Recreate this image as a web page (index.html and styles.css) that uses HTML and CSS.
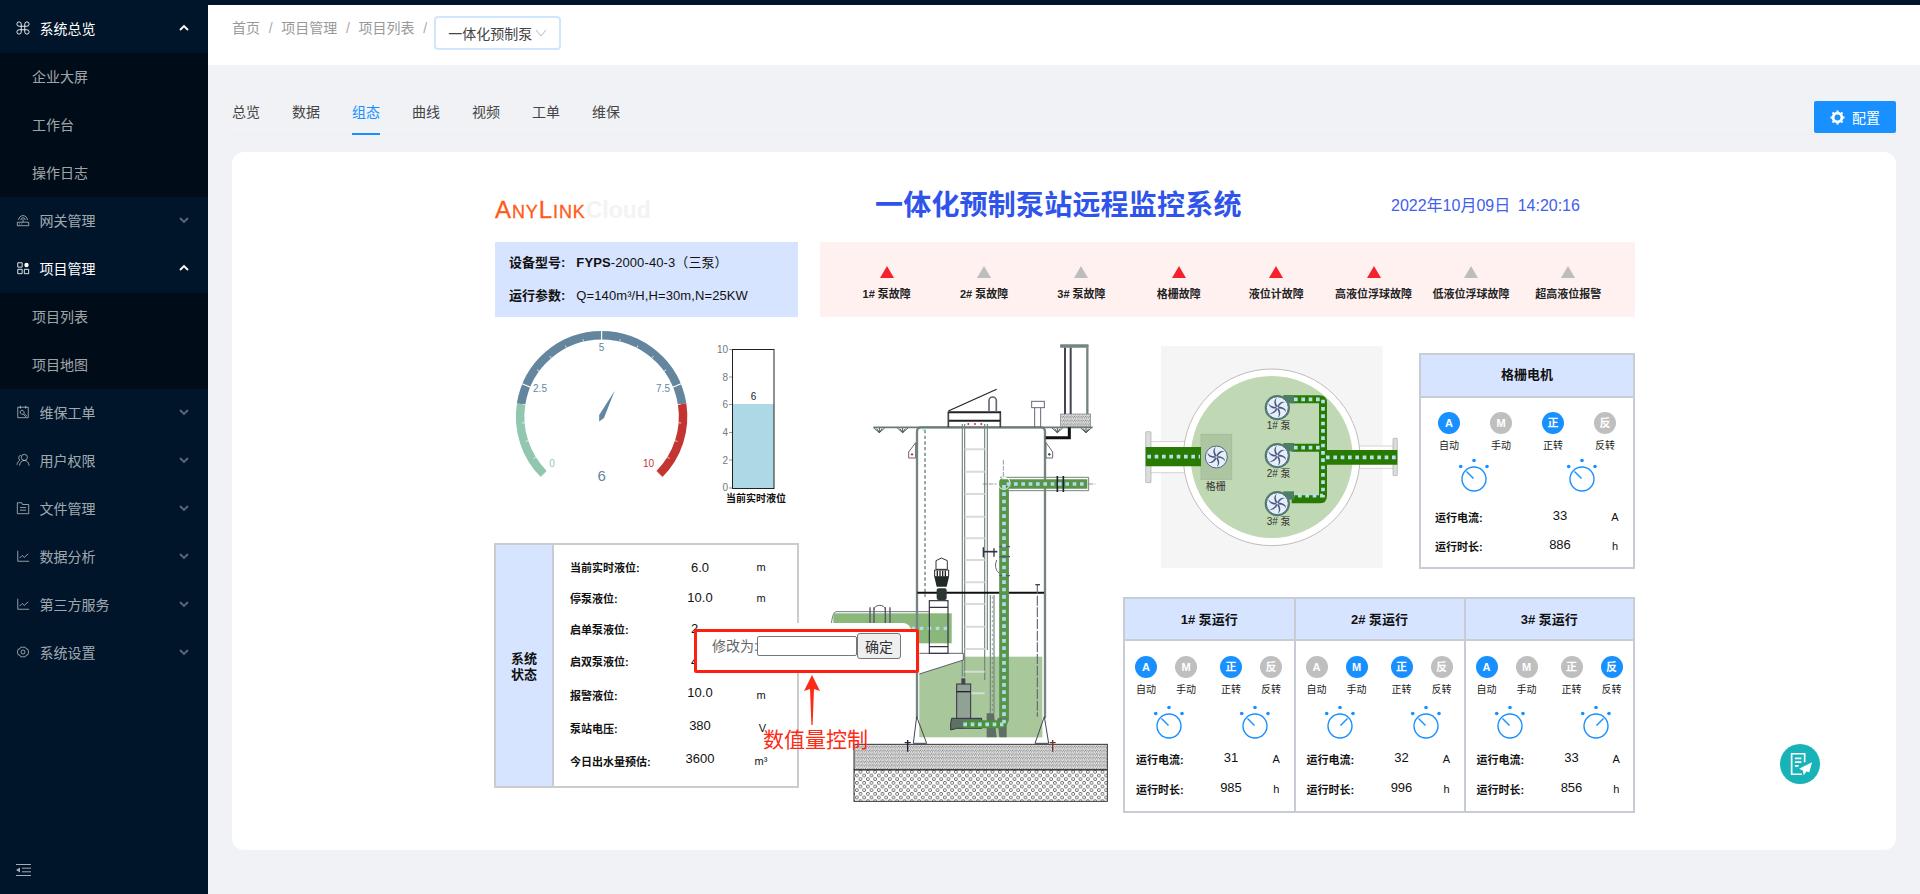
FILE: index.html
```html
<!DOCTYPE html>
<html lang="zh-CN">
<head>
<meta charset="utf-8">
<title>一体化预制泵</title>
<link rel="stylesheet" href="styles.css">
</head>
<body>
<svg class="defs" width="0" height="0" aria-hidden="true">
  <defs>
    <symbol id="chev-d" viewBox="0 0 10 10"><path d="M1 3l4 4 4-4" fill="none" stroke="currentColor" stroke-width="1.8"/></symbol>
    <symbol id="chev-u" viewBox="0 0 10 10"><path d="M1 7l4-4 4 4" fill="none" stroke="currentColor" stroke-width="1.8"/></symbol>
    <symbol id="knob-l" viewBox="0 0 40 40">
      <g fill="#1890ff"><circle cx="6.7" cy="11.5" r="1.8"/><circle cx="20" cy="5.5" r="1.8"/><circle cx="33" cy="11.5" r="1.8"/></g>
      <circle cx="20" cy="24" r="12" fill="none" stroke="#1890ff" stroke-width="1.4"/>
      <path d="M12.5 16.5L19.5 23.5" stroke="#1890ff" stroke-width="1.4"/>
    </symbol>
    <symbol id="knob-r" viewBox="0 0 40 40">
      <g fill="#1890ff"><circle cx="6.7" cy="11.5" r="1.8"/><circle cx="20" cy="5.5" r="1.8"/><circle cx="33" cy="11.5" r="1.8"/></g>
      <circle cx="20" cy="24" r="12" fill="none" stroke="#1890ff" stroke-width="1.4"/>
      <path d="M27.5 16.5L20.5 23.5" stroke="#1890ff" stroke-width="1.4"/>
    </symbol>
    <pattern id="speck" width="11" height="11" patternUnits="userSpaceOnUse">
      <rect width="11" height="11" fill="#e4e4e4"/>
      <g fill="#333"><circle cx="2" cy="3" r="1.3"/><circle cx="7.500" cy="1.500" r="1.100"/><circle cx="9.500" cy="6" r="1.400"/><circle cx="4.500" cy="7" r="1.200"/><circle cx="1" cy="9.500" r="1.100"/><circle cx="7" cy="10" r="1.300"/></g>
    </pattern>
    <pattern id="rings" width="22" height="22" patternUnits="userSpaceOnUse">
      <circle cx="5.500" cy="5.500" r="4.500" fill="none" stroke="#333" stroke-width="2"/>
      <circle cx="16.500" cy="16.500" r="4.500" fill="none" stroke="#333" stroke-width="2"/>
    </pattern>
    <g id="blade"><path d="M0-5C5-14 14-22 25-16 16-17 8-11 3 0Z" fill="#4a5a7c"/></g>
    <g id="fan">
      <circle r="33" fill="#e6eefc" stroke="#55657f" stroke-width="3"/>
      <use href="#blade"/>
      <use href="#blade" transform="rotate(60)"/>
      <use href="#blade" transform="rotate(120)"/>
      <use href="#blade" transform="rotate(180)"/>
      <use href="#blade" transform="rotate(240)"/>
      <use href="#blade" transform="rotate(300)"/>
    </g>
    <g id="gnd" fill="none" stroke="#4c5a58" stroke-width="3"><path d="M-16 0L0 14 16 0M-8 2L0 14 8 2M0 0V14"/></g>
  </defs>
</svg>

<div class="app">
  <aside class="sider">
    <nav class="menu">
      <a class="item open">
        <svg class="ico" viewBox="0 0 16 16"><path d="M6 6H3.500A2.500 2.500 0 1 1 6 3.500V12.500A2.500 2.500 0 1 1 3.500 10H12.500A2.500 2.500 0 1 1 10 12.500V3.500A2.500 2.500 0 1 1 12.500 6H6Z"/></svg>
        <span class="lbl">系统总览</span><svg class="chev"><use href="#chev-u"/></svg>
      </a>
      <div class="sub">
        <a class="sub-item">企业大屏</a>
        <a class="sub-item">工作台</a>
        <a class="sub-item">操作日志</a>
      </div>
      <a class="item">
        <svg class="ico" viewBox="0 0 16 16"><path d="M1.500 10.500h13v4h-13zM3 8a5 5 0 0 1 10 0M5.500 8a2.500 2.500 0 0 1 5 0M8 7v3.500M3.500 12.500h1M6 12.500h1"/></svg>
        <span class="lbl">网关管理</span><svg class="chev"><use href="#chev-d"/></svg>
      </a>
      <a class="item open">
        <svg class="ico" viewBox="0 0 16 16"><path d="M2 2h5v5H2zM2 9.500h5v5H2zM9.500 9.500h5v5h-5z"/><circle class="solid" cx="12" cy="4.500" r="2.500"/></svg>
        <span class="lbl">项目管理</span><svg class="chev"><use href="#chev-u"/></svg>
      </a>
      <div class="sub">
        <a class="sub-item">项目列表</a>
        <a class="sub-item">项目地图</a>
      </div>
      <a class="item">
        <svg class="ico" viewBox="0 0 16 16"><path d="M2 2.500h12v12H2zM5 1v3M11 1v3M5.500 6.500a2.300 2.300 0 0 1 3.500 2.800l3 3-1 1-3-3a2.300 2.300 0 0 1-2.500-3.800"/></svg>
        <span class="lbl">维保工单</span><svg class="chev"><use href="#chev-d"/></svg>
      </a>
      <a class="item">
        <svg class="ico" viewBox="0 0 16 16"><circle cx="9.500" cy="5" r="3.500"/><path d="M4 14.500c.5-3.500 2.500-6 5.500-6s5 2.500 5.500 6M5.500 2.500a3 3 0 0 0-1 5.500C3 9 1.500 11 1 13.500"/></svg>
        <span class="lbl">用户权限</span><svg class="chev"><use href="#chev-d"/></svg>
      </a>
      <a class="item">
        <svg class="ico" viewBox="0 0 16 16"><path d="M1.500 2h5l1 2h7v10.500h-13zM4.500 7.500h7M4.500 10.500h7"/></svg>
        <span class="lbl">文件管理</span><svg class="chev"><use href="#chev-d"/></svg>
      </a>
      <a class="item">
        <svg class="ico" viewBox="0 0 16 16"><path d="M2 2v12h13M4 10.500l3-3 2.500 2 4.500-4"/></svg>
        <span class="lbl">数据分析</span><svg class="chev"><use href="#chev-d"/></svg>
      </a>
      <a class="item">
        <svg class="ico" viewBox="0 0 16 16"><path d="M2 2v12h13M4 10.500l3-3 2.500 2 4.500-4"/></svg>
        <span class="lbl">第三方服务</span><svg class="chev"><use href="#chev-d"/></svg>
      </a>
      <a class="item">
        <svg class="ico" viewBox="0 0 16 16"><path d="M5.500 2.500h5l1 1.800 2 .5 1 3.200-1 3.200-2 .5-1 1.800h-5l-1-1.800-2-.5-1-3.200 1-3.200 2-.5z"/><circle cx="8" cy="8" r="2.300"/></svg>
        <span class="lbl">系统设置</span><svg class="chev"><use href="#chev-d"/></svg>
      </a>
    </nav>
    <div class="collapse">
      <svg viewBox="0 0 15 12"><path d="M0 .5h15M6 4.200h9M6 7.800h9M0 11.500h15" stroke="currentColor" fill="none"/><path d="M4 3.500v5L0 6z" fill="currentColor"/></svg>
    </div>
  </aside>

  <div class="main">
    <header class="topbar">
      <span class="crumb">首页</span><span class="sep">/</span>
      <span class="crumb">项目管理</span><span class="sep">/</span>
      <span class="crumb">项目列表</span><span class="sep">/</span>
      <span class="tag">一体化预制泵<svg viewBox="0 0 12 8"><path d="M1 1l5 6 5-6" fill="none" stroke="currentColor"/></svg></span>
    </header>

    <div class="content">
      <div class="tabbar">
        <div class="tabs">
          <a class="tab">总览</a><a class="tab">数据</a><a class="tab active">组态</a><a class="tab">曲线</a><a class="tab">视频</a><a class="tab">工单</a><a class="tab">维保</a>
        </div>
        <button class="cfg">
          <svg viewBox="0 0 16 16"><circle cx="8" cy="8" r="4.700" fill="none" stroke="#fff" stroke-width="3"/><path d="M8 .5v3M8 12.500v3M.5 8h3M12.500 8h3M2.700 2.700l2.100 2.100M11.200 11.200l2.100 2.100M2.700 13.300l2.100-2.100M11.200 4.800l2.100-2.100" stroke="#fff" stroke-width="2.200"/></svg>
          配置
        </button>
      </div>

      <main class="card">
        <div class="logo"><span class="big">A</span>NY<span class="big">L</span>INK<span class="cloud">Cloud</span></div>
        <h1 class="title">一体化预制泵站远程监控系统</h1>
        <div class="date">2022年10月09日 14:20:16</div>

        <section class="info">
          <p><b>设备型号:</b><span><b>FYPS</b>-2000-40-3（三泵）</span></p>
          <p><b>运行参数:</b><span>Q=140m³/H,H=30m,N=25KW</span></p>
        </section>

        <section class="alarms">
          <div class="alarm"><i class="tri red"></i><span>1# 泵故障</span></div>
          <div class="alarm"><i class="tri"></i><span>2# 泵故障</span></div>
          <div class="alarm"><i class="tri"></i><span>3# 泵故障</span></div>
          <div class="alarm"><i class="tri red"></i><span>格栅故障</span></div>
          <div class="alarm"><i class="tri red"></i><span>液位计故障</span></div>
          <div class="alarm"><i class="tri red"></i><span>高液位浮球故障</span></div>
          <div class="alarm"><i class="tri"></i><span>低液位浮球故障</span></div>
          <div class="alarm"><i class="tri"></i><span>超高液位报警</span></div>
        </section>

        <svg class="gauge" viewBox="510 325 185 165">
          <g fill="none" stroke-width="8.500">
            <path d="M544 474.300A81.500 81.500 0 0 1 521.100 404" stroke="#91c7ae"/>
            <path d="M521.100 404A81.500 81.500 0 0 1 682.100 404" stroke="#63869e"/>
            <path d="M682.100 404A81.500 81.500 0 0 1 659.200 474.300" stroke="#c23531"/>
          </g>
          <path d="M546 472.300A78.600 78.600 0 1 1 657.200 472.300" fill="none" stroke="#fff" stroke-width="2.600" pathLength="20" stroke-dasharray="0.05 0.95" stroke-dashoffset="0.025" opacity=".7"/>
          <path d="M544 474.300A81.500 81.500 0 1 1 659.200 474.300" fill="none" stroke="#fff" stroke-width="9" pathLength="4" stroke-dasharray="0.012 0.988" stroke-dashoffset="0.006"/>
          <path d="M614.700 390.700L599.200 415V421.600L604 418Z" fill="#63869e"/>
          <g class="g-lab">
            <text x="552" y="466.500" fill="#91c7ae">0</text>
            <text x="540" y="391.500" fill="#63869e">2.5</text>
            <text x="601.600" y="350.500" fill="#63869e">5</text>
            <text x="663" y="391.500" fill="#63869e">7.5</text>
            <text x="648.600" y="466.500" fill="#c23531">10</text>
          </g>
          <text class="g-val" x="601.600" y="481">6</text>
        </svg>

        <svg class="thermo" viewBox="710 340 90 170">
          <rect x="732.500" y="404" width="41.500" height="84" fill="#add8e6"/>
          <rect x="732.500" y="349.500" width="41.500" height="139" fill="none" stroke="#222"/>
          <g stroke="#999"><path d="M729 349.500h3M729 377h3M729 404.500h3M729 432.500h3M729 460h3M729 488h3"/></g>
          <g class="t-lab">
            <text x="728" y="353">10</text><text x="728" y="380.500">8</text><text x="728" y="408">6</text>
            <text x="728" y="436">4</text><text x="728" y="463.500">2</text><text x="728" y="491">0</text>
          </g>
          <text class="t-v" x="753.500" y="399.500">6</text>
          <text class="t-cap" x="756" y="502">当前实时液位</text>
        </svg>

        <svg class="tank" viewBox="0 0 1020 1440">
          <rect x="162" y="1243" width="760" height="76" fill="url(#speck)" stroke="#333" stroke-width="3"/>
          <rect x="162" y="1320" width="760" height="94" fill="url(#rings)" stroke="#333" stroke-width="3"/>
          <rect x="358" y="980" width="369" height="242" fill="#a8c79a"/>
          <!-- inlet -->
          <path d="M388 845H108a14 46 0 0 0 0 92" fill="none" stroke="#778" stroke-width="3"/>
          <rect x="100" y="850" width="355" height="90" fill="#8ab77a"/>
          <path d="M210 832v50M222 832v50M256 832v50M270 832v50" stroke="#556" stroke-width="4"/>
          <path d="M222 838a17 12 0 0 1 34 0" fill="none" stroke="#556" stroke-width="3"/>
          <path d="M335 895H452" stroke="#b0dcea" stroke-width="10" stroke-dasharray="11 13"/>
          <!-- walls -->
          <path d="M351 1165V305q0-13 13-13H722q13 0 13 13V1165" fill="none" stroke="#74857f" stroke-width="7"/>
          <path d="M220 292H878" stroke="#6c7a78" stroke-width="5"/>
          <path d="M375 300V800" stroke="#9aa8a6" stroke-width="6" stroke-dasharray="10 7"/>
          <path d="M368 296h10l-4 6h-6z" fill="#9fe6cf"/>
          <!-- ladder -->
          <path d="M487 282V1040M494 282V1040M554 282V1050M562 282V960" stroke="#74857f" stroke-width="3.500" fill="none"/>
          <path d="M494 358H554M494 425H554M494 492H554M494 560H554M494 625H554M494 690H554M494 757H554M494 822H554M494 890H554M494 957H554M494 1025H554M494 1090H554" stroke="#d6dcda" stroke-width="6"/>
          <!-- hatch -->
          <path d="M445 245V292M601 245V292" stroke="#444" stroke-width="5"/>
          <path d="M445 247H603M447 272H601" stroke="#222" stroke-width="6"/>
          <path d="M445 243L590 178" stroke="#222" stroke-width="3.500"/>
          <path d="M567 245V212a11 11 0 0 1 22 0V245" fill="none" stroke="#667" stroke-width="5"/>
          <g fill="#c33"><circle cx="505" cy="282" r="3"/><circle cx="525" cy="282" r="3"/><circle cx="544" cy="282" r="3"/></g>
          <!-- vent -->
          <rect x="695" y="214" width="38" height="19" fill="#fff" stroke="#667" stroke-width="3"/>
          <path d="M704 233V292M722 233V292" stroke="#667" stroke-width="3"/>
          <!-- control post -->
          <rect x="782" y="252" width="90" height="38" fill="url(#speck)" stroke="#74857f" stroke-width="2"/>
          <path d="M795 52V252M812 52V252" stroke="#445" stroke-width="6"/>
          <path d="M862 52V252" stroke="#74857f" stroke-width="7"/>
          <rect x="780" y="43" width="86" height="10" rx="3" fill="#74857f"/>
          <path d="M737 323H808V292" fill="none" stroke="#111" stroke-width="9"/>
          <!-- ground marks -->
          <use href="#gnd" x="238" y="294"/><use href="#gnd" x="308" y="294"/><use href="#gnd" x="772" y="294"/><use href="#gnd" x="858" y="294"/>
          <!-- brackets -->
          <path d="M347 338L326 366V384H347ZM738 338L758 366V384H738Z" fill="#fff" stroke="#667" stroke-width="3"/>
          <circle cx="336" cy="373" r="3.500" fill="#c33"/><circle cx="748" cy="373" r="3.500" fill="#234"/>
          <!-- floor -->
          <path d="M352 788H732" stroke="#111" stroke-width="6"/>
          <!-- thin pipes -->
          <path d="M712 762V1160" stroke="#667" stroke-width="3.500" stroke-dasharray="30 5"/>
          <path d="M706 764H720" stroke="#445" stroke-width="4"/>
          <path d="M571 795V1150M582 795V1150" stroke="#74857f" stroke-width="3.500"/>
          <path d="M577 800V1150" stroke="#667" stroke-width="2" stroke-dasharray="6 8"/>
          <!-- shelf -->
          <path d="M358 970H490V990L358 1032" fill="#fff" stroke="#445" stroke-width="2.500"/>
          <!-- pump + motor in dry chamber -->
          <rect x="388" y="812" width="56" height="158" fill="none" stroke="#334" stroke-width="3.500"/>
          <path d="M388 832H444M388 950H444" stroke="#334" stroke-width="3.500"/>
          <rect x="410" y="775" width="30" height="35" rx="6" fill="#2b3533"/>
          <path d="M403 740H447L440 770H410Z" fill="#222a28"/>
          <path d="M408 692L424 684 442 692V718H408Z" fill="#fff" stroke="#334" stroke-width="3"/>
          <path d="M404 720H446V740H404Z" fill="#fff" stroke="#222" stroke-width="3"/>
          <path d="M412 722v16M420 722v16M428 722v16M436 722v16" stroke="#222" stroke-width="4"/>
          <!-- outlet pipe -->
          <path d="M600 442H866V482H625V1175M600 1175V458Q600 442 616 442" fill="none" stroke="#74857f" stroke-width="3"/>
          <path d="M612 1170V462H862" fill="none" stroke="#5a9448" stroke-width="28"/>
          <path d="M548 462H590M866 462H886M610 390V440" stroke="#667" stroke-width="2" stroke-dasharray="14 4"/>
          <circle cx="612" cy="460" r="18" fill="none" stroke="#fff" stroke-width="3"/>
          <path d="M772 438V486M790 438V486" stroke="#223" stroke-width="5"/>
          <path d="M598 650H630M598 680H630M598 737H630" stroke="#556" stroke-width="4"/>
          <path d="M552 665H592" stroke="#334" stroke-width="5"/>
          <path d="M550 652V682M582 655V680" stroke="#334" stroke-width="4"/>
          <path d="M590 690Q580 715 598 730" fill="none" stroke="#667" stroke-width="3"/>
          <!-- submersible -->
          <rect x="470" y="1062" width="42" height="105" fill="#8fa294" stroke="#334" stroke-width="3"/>
          <path d="M470 1085H512" stroke="#223" stroke-width="4"/>
          <rect x="484" y="1045" width="12" height="18" fill="#445"/>
          <path d="M455 1165H545V1195H470L452 1200V1180Z" fill="#5f7064" stroke="#334" stroke-width="3"/>
          <path d="M560 1150H582L590 1222H560ZM592 1165H620V1222H598Z" fill="#5f6f66"/>
          <path d="M490 1183H600Q612 1183 612 1170" fill="none" stroke="#4f8f3c" stroke-width="24"/>
          <path d="M612 1180V462H862M490 1183H610" fill="none" stroke="#aedde8" stroke-width="11" stroke-dasharray="11 11"/>
          <!-- feet and bolts -->
          <path d="M350 1160L340 1240H380ZM733 1160L705 1240H746Z" fill="none" stroke="#445" stroke-width="3"/>
          <path d="M323 1230V1265M314 1238H332" stroke="#223" stroke-width="4"/>
          <path d="M758 1230V1265M749 1238H767" stroke="#733" stroke-width="4"/>
        </svg>

        <svg class="plan" viewBox="-30 0 795 705">
          <rect x="33" y="18" width="665" height="666" fill="#f5f5f5"/>
          <rect x="0" y="305" width="110" height="93" fill="#fff" stroke="#d4d4d4" stroke-width="3"/>
          <rect x="-13" y="275" width="16" height="153" rx="2" fill="#dcdcdc" stroke="#aaa" stroke-width="2"/>
          <rect x="620" y="318" width="110" height="67" fill="#fff" stroke="#d4d4d4" stroke-width="3"/>
          <rect x="729" y="295" width="13" height="112" rx="2" fill="#dcdcdc" stroke="#aaa" stroke-width="2"/>
          <circle cx="365" cy="352" r="265" fill="#fff" stroke="#bdbdbd" stroke-width="3"/>
          <circle cx="365" cy="351" r="243" fill="#c0d8b4"/>
          <rect x="153" y="283" width="92" height="135" fill="#adc6a1" stroke="#a5bd9b" stroke-width="3"/>
          <path d="M-13 350H153" stroke="#287b00" stroke-width="58"/>
          <path d="M520 352H742" stroke="#287b00" stroke-width="44"/>
          <path d="M425 178H508Q519 178 519 189V467Q519 478 508 478H425M425 323H519" fill="none" stroke="#287b00" stroke-width="24"/>
          <g fill="#4c7f63"><rect x="400" y="165" width="32" height="25"/><rect x="400" y="309" width="32" height="25"/><rect x="400" y="454" width="32" height="25"/></g>
          <g fill="none" stroke="#b5e0ec" stroke-width="11" stroke-dasharray="11 11">
            <path d="M-8 350H150"/><path d="M528 352H740"/>
            <path d="M432 178H519V467H432"/><path d="M432 323H512"/>
          </g>
          <g fill="#4c7f63"><circle cx="382" cy="203" r="38"/><circle cx="382" cy="347" r="38"/><circle cx="382" cy="491" r="38"/></g>
          <use href="#fan" x="382" y="203"/><use href="#fan" x="382" y="347"/><use href="#fan" x="382" y="491"/>
          <use href="#fan" x="199" y="351"/>
          <g class="p-lab">
            <text x="386" y="266">1# 泵</text><text x="386" y="410">2# 泵</text>
            <text x="386" y="556">3# 泵</text><text x="197" y="451">格栅</text>
          </g>
        </svg>

        <section class="motor mcard">
          <h4>格栅电机</h4>
          <div class="lamps">
            <div class="lampc"><b class="lamp on">A</b><span>自动</span></div>
            <div class="lampc"><b class="lamp">M</b><span>手动</span></div>
            <div class="lampc"><b class="lamp on">正</b><span>正转</span></div>
            <div class="lampc"><b class="lamp">反</b><span>反转</span></div>
          </div>
          <div class="knobs"><svg><use href="#knob-l"/></svg><svg><use href="#knob-l"/></svg></div>
          <div class="mrow"><b>运行电流:</b><span>33</span><em>A</em></div>
          <div class="mrow"><b>运行时长:</b><span>886</span><em>h</em></div>
        </section>

        <section class="pumps">
          <div class="mcard">
            <h4>1# 泵运行</h4>
            <div class="lamps">
              <div class="lampc"><b class="lamp on">A</b><span>自动</span></div>
              <div class="lampc"><b class="lamp">M</b><span>手动</span></div>
              <div class="lampc"><b class="lamp on">正</b><span>正转</span></div>
              <div class="lampc"><b class="lamp">反</b><span>反转</span></div>
            </div>
            <div class="knobs"><svg><use href="#knob-l"/></svg><svg><use href="#knob-l"/></svg></div>
            <div class="mrow"><b>运行电流:</b><span>31</span><em>A</em></div>
            <div class="mrow"><b>运行时长:</b><span>985</span><em>h</em></div>
          </div>
          <div class="mcard">
            <h4>2# 泵运行</h4>
            <div class="lamps">
              <div class="lampc"><b class="lamp">A</b><span>自动</span></div>
              <div class="lampc"><b class="lamp on">M</b><span>手动</span></div>
              <div class="lampc"><b class="lamp on">正</b><span>正转</span></div>
              <div class="lampc"><b class="lamp">反</b><span>反转</span></div>
            </div>
            <div class="knobs"><svg><use href="#knob-r"/></svg><svg><use href="#knob-l"/></svg></div>
            <div class="mrow"><b>运行电流:</b><span>32</span><em>A</em></div>
            <div class="mrow"><b>运行时长:</b><span>996</span><em>h</em></div>
          </div>
          <div class="mcard">
            <h4>3# 泵运行</h4>
            <div class="lamps">
              <div class="lampc"><b class="lamp on">A</b><span>自动</span></div>
              <div class="lampc"><b class="lamp">M</b><span>手动</span></div>
              <div class="lampc"><b class="lamp">正</b><span>正转</span></div>
              <div class="lampc"><b class="lamp on">反</b><span>反转</span></div>
            </div>
            <div class="knobs"><svg><use href="#knob-l"/></svg><svg><use href="#knob-r"/></svg></div>
            <div class="mrow"><b>运行电流:</b><span>33</span><em>A</em></div>
            <div class="mrow"><b>运行时长:</b><span>856</span><em>h</em></div>
          </div>
        </section>

        <section class="status">
          <div class="st-head">系统<br>状态</div>
          <div class="st-rows">
            <div class="st-row"><b>当前实时液位:</b><span>6.0</span><em>m</em></div>
            <div class="st-row"><b>停泵液位:</b><span>10.0</span><em>m</em></div>
            <div class="st-row"><b>启单泵液位:</b><span>2.0</span><em>m</em></div>
            <div class="st-row"><b>启双泵液位:</b><span>4.0</span><em>m</em></div>
            <div class="st-row"><b>报警液位:</b><span class="up">10.0</span><em>m</em></div>
            <div class="st-row"><b>泵站电压:</b><span class="up">380</span><em class="shift">V</em></div>
            <div class="st-row"><b>今日出水量预估:</b><span class="up">3600</span><em>m³</em></div>
          </div>
        </section>

        <div class="popup-bg"></div>
        <div class="annot">
          <label class="edit-lbl">修改为:</label><input class="edit-in" type="text"><button class="edit-ok">确定</button>
        </div>
        <svg class="arrow" viewBox="0 0 20 52"><path d="M10 0L18 16 12 14 10.600 50H9.400L8 14 2 16Z" fill="#ff2a14"/></svg>
        <div class="annot-txt">数值量控制</div>
      </main>
    </div>
  </div>
</div>

<button class="fab" aria-label="反馈">
  <svg viewBox="0 0 28 28"><path d="M19 12V3H5v22h11" fill="none" stroke="#fff" stroke-width="1.800"/><path d="M8.500 8h7M8.500 12h7M8.500 16h4" stroke="#fff" stroke-width="1.800"/><path d="M27 12L13 19l4 2 1 5 3-4 3 1z" fill="#fff"/></svg>
</button>
</body>
</html>
```

FILE: styles.css
```css
* { box-sizing: border-box; }
html, body { margin: 0; padding: 0; }
body {
  width: 1920px; height: 894px; overflow: hidden;
  font-family: "Liberation Sans", "Noto Sans CJK SC", sans-serif;
  font-size: 14px; background: #f0f2f5; color: #333;
}
.defs { position: absolute; }
.app { display: flex; height: 894px; }

/* sidebar */
.sider {
  width: 208px; flex: none; background: #001529; padding-top: 5px;
  display: flex; flex-direction: column; color: rgba(255,255,255,.65);
}
.menu { flex: 1; }
.item { display: flex; align-items: center; height: 48px; padding: 0 19px 2px 16px; }
.item.open { color: #fff; }
.ico { width: 14px; height: 14px; fill: none; stroke: currentColor; stroke-width: 1; flex: none; margin-right: 9.500px; }
.ico .solid { fill: currentColor; stroke: none; }
.lbl { flex: 1; }
.chev { width: 10px; height: 10px; opacity: .55; }
.item.open .chev { opacity: 1; }
.sub { background: #000c17; }
.sub-item { display: block; height: 48px; line-height: 48px; padding-left: 32px; }
.collapse { height: 48px; padding: 18px 16px 0; }
.collapse svg { width: 15px; height: 12px; display: block; }

/* header */
.main { flex: 1; min-width: 0; display: flex; flex-direction: column; border-top: 5px solid #001529; }
.topbar { height: 60px; background: #fff; display: flex; align-items: flex-start; padding: 12px 0 0 24px; color: #999; }
.crumb { line-height: 22px; }
.sep { line-height: 22px; margin: 0 8.700px; color: #aaa; }
.tag {
  display: flex; align-items: center; justify-content: space-between;
  margin-top: -1px; margin-left: -1.500px; width: 127px; height: 34px; padding: 0 12px 0 12px;
  border: 2px solid #cfe6fd; border-radius: 4px; color: #444;
}
.tag svg { width: 12px; height: 8px; color: #bbb; }

.content { padding: 0 24px; }
.tabbar { display: flex; justify-content: space-between; align-items: flex-start; height: 70px; margin-bottom: 17px; border-bottom: 1px solid #eceef1; }
.tabs { display: flex; gap: 32px; padding-top: 35.500px; }
.tab { display: block; line-height: 22px; height: 34.500px; color: #444; }
.tab.active { color: #1890ff; border-bottom: 2px solid #1890ff; }
.cfg {
  margin-top: 36px; width: 82px; height: 32px; border: 0; border-radius: 2px;
  background: #1890ff; color: #fff; font: inherit;
  display: flex; align-items: center; justify-content: center; gap: 7px;
}
.cfg svg { width: 15px; height: 15px; }

/* SCADA canvas: origin is the card's corner */
.card { position: relative; height: 698px; background: #fff; border-radius: 12px; color: #111; }
.logo { position: absolute; left: 263px; top: 44px; font-size: 18px; line-height: 28px; letter-spacing: .9px; color: #ff5a1c; white-space: nowrap; -webkit-text-stroke: .3px #ff5a1c; }
.logo .big { font-size: 24px; }
.logo .cloud { font-size: 23px; color: #f3f3f3; letter-spacing: 0; font-weight: bold; -webkit-text-stroke: 0; }
.title { position: absolute; left: 643px; top: 33px; margin: 0; font-size: 28px; line-height: 42px; letter-spacing: .2px; color: #2f54eb; white-space: nowrap; font-weight: bold; }
.date { position: absolute; left: 1159px; top: 43px; font-size: 16px; line-height: 22px; word-spacing: 3px; color: #4060ee; white-space: nowrap; }

.info { position: absolute; left: 263px; top: 90px; width: 303px; height: 75px; background: #d6e4ff; padding: 4px 14px; font-size: 13px; }
.info p { margin: 0; height: 33px; line-height: 33px; display: flex; white-space: nowrap; }
.info p > b { margin-right: 11px; }
.info span { font-size: 13px; letter-spacing: .1px; }

.alarms { position: absolute; left: 588px; top: 90px; width: 815px; height: 75px; background: #fff1f0; padding: 24px 18px 0; display: flex; }
.alarm { flex: 1; display: flex; flex-direction: column; align-items: center; font-size: 11px; font-weight: bold; color: #222; white-space: nowrap; }
.alarm span { line-height: 14px; margin-top: 9px; }
.tri { width: 0; height: 0; border: solid transparent; border-width: 0 7px 12px; border-bottom-color: #bdbdbd; }
.tri.red { border-bottom-color: #f5222d; }

.gauge { position: absolute; left: 278px; top: 173px; width: 185px; height: 165px; }
.g-lab text { font-size: 10px; text-anchor: middle; }
.g-val { font-size: 15px; text-anchor: middle; fill: #63869e; }
.thermo { position: absolute; left: 478px; top: 188px; width: 90px; height: 170px; }
.t-lab text { font-size: 10px; text-anchor: end; fill: #777; }
.t-v { font-size: 10px; text-anchor: middle; fill: #222; }
.t-cap { font-size: 10px; text-anchor: middle; fill: #111; font-weight: bold; }

.tank { position: absolute; left: 568px; top: 178px; width: 340px; height: 480px; }
.plan { position: absolute; left: 908px; top: 188px; width: 265px; height: 235px; }
.p-lab text { font-size: 30px; text-anchor: middle; fill: #333; }

/* motor cards */
.mcard h4 {
  margin: 0; height: 42px; line-height: 42px; text-align: center; background: #d6e4ff;
  font-size: 13px; font-weight: bold; border-bottom: 2px solid #c8ccd4; color: #111;
}
.motor { position: absolute; left: 1187px; top: 201px; width: 216px; height: 216px; border: 2px solid #c8ccd4; background: #fff; }
.pumps { position: absolute; left: 891px; top: 445px; width: 512px; height: 216px; border: 2px solid #c8ccd4; display: grid; grid-template-columns: 168.500px 170px 1fr; background: #fff; }
.pumps .mcard + .mcard { border-left: 2px solid #c8ccd4; }
.lamps { display: flex; padding: 15px 0 0 1px; }
.lampc { width: 40px; display: flex; flex-direction: column; align-items: center; }
.lampc:nth-child(3) { margin-left: 5px; }
.lampc span { font-size: 10px; line-height: 12px; margin-top: 6px; color: #222; }
.lamp { width: 22px; height: 22px; border-radius: 50%; background: #bfbfbf; color: #fff; font-size: 11px; line-height: 22px; text-align: center; font-weight: bold; }
.lamp.on { background: #1890ff; }
.knobs { display: flex; padding: 6px 0 0 24px; gap: 46px; }
.knobs svg { width: 40px; height: 40px; flex: none; }
.mrow { display: grid; grid-template-columns: 70px 50px 1fr; padding-left: 11px; height: 30px; align-items: center; }
.knobs + .mrow { margin-top: 2px; }
.mrow b { font-size: 11px; }
.mrow span { font-size: 13px; text-align: center; margin-bottom: 3px; }
.mrow em { font-style: normal; font-size: 11px; text-align: center; padding-left: 3px; }
.motor h4 { height: 43px; line-height: 40px; }
.motor .lamps { padding: 14px 0 0 2px; }
.motor .lampc { width: 52px; }
.motor .lampc:nth-child(3) { margin-left: 0; }
.motor .knobs { padding: 3px 0 0 33px; gap: 68px; }
.motor .knobs + .mrow { margin-top: 7px; }
.motor .mrow { grid-template-columns: 100px 50px 1fr; padding-left: 14px; height: 29px; }
.motor .mrow em { padding-left: 12px; }

/* status table */
.status { position: absolute; left: 262px; top: 391px; width: 305px; height: 245px; border: 2px solid #ccc; display: flex; background: #fff; }
.st-head { width: 58px; flex: none; background: #d6e4ff; border-right: 2px solid #c8ccd4; display: flex; align-items: center; justify-content: center; text-align: center; font-size: 13px; font-weight: bold; line-height: 16px; padding-top: 2px; }
.st-rows { flex: 1; padding: 7px 0 0 16px; display: grid; grid-template-rows: 30px 31px 31px 34px 33px 33px 33px; grid-template-columns: 100px 60px 62px; }
.st-row { display: contents; }
.st-row b { font-size: 11px; align-self: center; }
.st-row span { font-size: 13px; text-align: center; align-self: center; }
.st-row span.up { margin-bottom: 5px; }
.st-row em { font-style: normal; font-size: 11px; text-align: center; align-self: center; }
.st-row em.shift { padding-left: 3px; }

/* overlays */
.popup-bg { position: absolute; left: 467px; top: 471px; width: 212px; height: 46px; background: #fff; border-radius: 8px; }
.annot { position: absolute; left: 462px; top: 477px; width: 225px; height: 44px; border: 3px solid #ff1f10; border-radius: 2px; background: #fff; padding: 1px 0 0 15px; display: flex; align-items: flex-start; }
.edit-lbl { font-size: 14px; line-height: 20px; margin-top: 3px; color: #666; width: 45px; flex: none; white-space: nowrap; }
.edit-in { width: 100px; height: 20px; margin-top: 3px; border: 1px solid #767676; border-radius: 2px; background: #fff; padding: 0; flex: none; }
.edit-ok { width: 44px; height: 26px; border: 1px solid #767676; border-radius: 3px; background: #efefef; font: inherit; color: #333; padding: 0; flex: none; }
.arrow { position: absolute; left: 570px; top: 523px; width: 20px; height: 52px; }
.annot-txt { position: absolute; left: 531px; top: 573px; font-size: 21px; line-height: 30px; color: #ff2a14; white-space: nowrap; }
.fab { position: fixed; left: 1780px; top: 744px; width: 40px; height: 40px; padding: 7px; border: 0; border-radius: 50%; background: #17b3b8; }
.fab svg { display: block; width: 26px; height: 26px; }
```
